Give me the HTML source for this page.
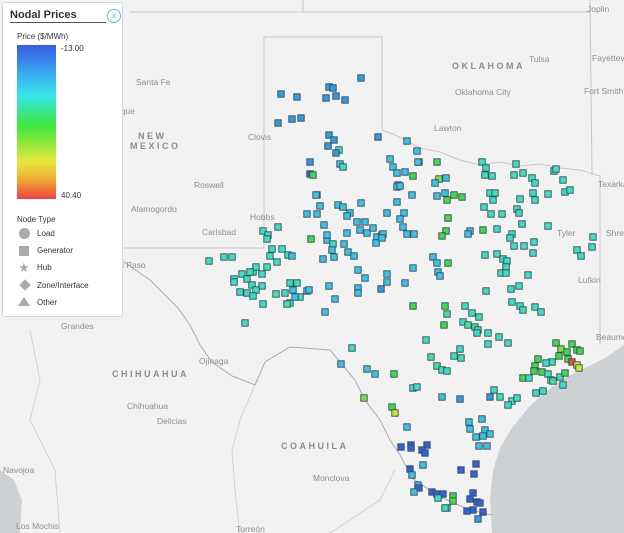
<!DOCTYPE html>
<html><head><meta charset="utf-8"><style>
html,body{margin:0;padding:0}
body{width:624px;height:533px;overflow:hidden;background:#f2f2f2;font-family:"Liberation Sans",sans-serif;position:relative}
svg{position:absolute;left:0;top:0}
.lbl{font-size:8.5px;fill:#8e8e8e}
.st{font-size:9px;fill:#8c8c8c;font-weight:bold;letter-spacing:2.5px}
#leg{position:absolute;left:2px;top:2px;width:121px;height:315px;background:#fff;border:1px solid #d8d8d8;border-radius:3px;box-sizing:border-box}
#leg .t{position:absolute;left:7px;top:6px;font-size:11px;font-weight:bold;color:#333}
#leg .ul{position:absolute;left:7px;top:19px;width:96px;height:1px;background:#555}
#leg .x{position:absolute;left:104px;top:6px;width:12px;height:12px;border:1.5px solid #4cc8e0;border-radius:50%;font-size:8px;color:#4cc8e0;text-align:center;line-height:12px}
#leg .s{position:absolute;font-size:8px;color:#333}
#bar{position:absolute;left:14px;top:42px;width:39px;height:154px;background:linear-gradient(#3a5ae6 0%,#38a8f0 18%,#36e6e8 33%,#3ee840 52%,#9ee83a 66%,#e8e83a 76%,#f0a632 88%,#f04040 100%)}
.ic{position:absolute;left:16px;background:#aaa}
</style></head><body>
<svg width="624" height="533" viewBox="0 0 624 533">
<path d="M0 470 L14 480 L22 500 L20 533 L0 533Z" fill="#cdd1d4"/>
<path d="M624 345 L605 358 L585 368 L565 378 L545 392 L528 408 L512 428 L500 448 L493 470 L490 500 L492 533 L624 533Z" fill="#cdd1d4"/>
<g fill="none" stroke="#c8c8c8" stroke-width="1">
<path d="M130 12 L590 12 M303 0 L303 12 M590 0 L592 175 M600 175 L600 345"/>
<path d="M264 37 L382 37 L382 130 L395 135 L405 140 L420 148 L440 152 L460 160 L480 165 L500 162 L520 166 L540 164 L560 168 L580 170 L600 176"/>
<path d="M264 37 L264 248 L124 248"/>
<path d="M124 262 L150 280 L165 295 L178 308 L190 325 L200 345 L212 362 L232 376 L255 385 L265 362 L290 347 L330 350 L340 362 L355 380 L365 400 L380 420 L390 440 L400 455 L412 478 L440 497 L470 510 L492 515" stroke="#aaa"/>
<path d="M255 385 L240 420 L232 450 L235 490 L240 533 M30 330 L40 380 L30 420 L55 470 L60 533 M330 533 L380 500 L395 470" stroke="#d2d2d2"/>
</g>
<g>
<text class="lbl" x="136" y="85">Santa Fe</text><text class="lbl" x="118" y="114">rque</text>
<text class="st" x="138" y="139">NEW</text><text class="st" x="130" y="149">MEXICO</text>
<text class="lbl" x="248" y="140">Clovis</text><text class="lbl" x="194" y="188">Roswell</text>
<text class="lbl" x="131" y="212">Alamogordo</text><text class="lbl" x="202" y="235">Carlsbad</text>
<text class="lbl" x="250" y="220">Hobbs</text><text class="lbl" x="122" y="268">l Paso</text>
<text class="st" x="452" y="69">OKLAHOMA</text><text class="lbl" x="529" y="62">Tulsa</text>
<text class="lbl" x="455" y="95">Oklahoma City</text><text class="lbl" x="434" y="131">Lawton</text>
<text class="lbl" x="584" y="94">Fort Smith</text><text class="lbl" x="592" y="61">Fayetteville</text>
<text class="lbl" x="587" y="12">Joplin</text><text class="lbl" x="598" y="187">Texarkana</text>
<text class="lbl" x="557" y="236">Tyler</text><text class="lbl" x="606" y="236">Shreveport</text>
<text class="lbl" x="578" y="283">Lufkin</text><text class="lbl" x="596" y="340">Beaumont</text>
<text class="lbl" x="61" y="329">Grandes</text><text class="lbl" x="199" y="364">Ojinaga</text>
<text class="st" x="112" y="377">CHIHUAHUA</text><text class="lbl" x="127" y="409">Chihuahua</text>
<text class="lbl" x="157" y="424">Delicias</text><text class="st" x="281" y="449">COAHUILA</text>
<text class="lbl" x="313" y="481">Monclova</text><text class="lbl" x="3" y="473">Navojoa</text>
<text class="lbl" x="16" y="529">Los Mochis</text><text class="lbl" x="236" y="532">Torreón</text>
</g>
<g id="m" stroke="#3a4a50" stroke-width="0.9"></g>
</svg>
<div id="leg">
<div class="t">Nodal Prices</div><div class="ul"></div><div class="x">x</div>
<div class="s" style="left:14px;top:29px">Price ($/MWh)</div>
<div id="bar"></div>
<div class="s" style="left:58px;top:41px">-13.00</div>
<div class="s" style="left:58px;top:188px">40.40</div>
<div class="s" style="left:14px;top:212px">Node Type</div>
<div class="ic" style="top:225px;width:11px;height:11px;border-radius:50%"></div><div class="s" style="left:34px;top:226px">Load</div>
<div class="ic" style="top:243px;width:10px;height:10px"></div><div class="s" style="left:34px;top:243px">Generator</div>
<div class="s" style="left:15px;top:257px;font-size:13px;color:#aaa">★</div><div class="s" style="left:34px;top:260px">Hub</div>
<div class="ic" style="top:278px;left:18px;width:8px;height:8px;transform:rotate(45deg)"></div><div class="s" style="left:34px;top:278px">Zone/Interface</div>
<div style="position:absolute;left:15px;top:294px;width:0;height:0;border-left:6px solid transparent;border-right:6px solid transparent;border-bottom:9px solid #aaa"></div><div class="s" style="left:34px;top:295px">Other</div>
</div>
<script>
var B='#2f9be8',C='#38c3ea',T='#38e0c4',G='#3ddc48',D='#3062e0',Y='#c8e83a',R='#f04a3a',L='#7ee040',E='#3ee2a8';
var P=[[361,78,B],[281,94,B],[297,97,B],[329,87,B],[333,88,B],[326,98,B],[336,96,B],[345,100,B],[278,123,B],[292,119,B],[301,118,B],[329,135,B],[334,140,B],[328,146,B],[339,150,T],[336,153,B],[310,162,B],[378,137,B],[407,141,C],[417,151,C],[390,159,C],[419,162,C],[437,162,G],[340,164,C],[343,167,T],[310,174,D],[313,175,G],[317,195,C],
[316,195,C],[320,206,C],[317,214,C],[307,214,C],[324,225,C],[263,231,T],[268,235,T],[267,239,T],[278,227,T],[272,249,T],[282,249,T],[288,255,T],[292,256,C],[270,256,T],[277,262,T],[311,239,G],[327,240,C],[327,235,C],[333,244,T],[344,244,C],[332,250,C],[334,257,C],[323,259,C],[348,252,C],[354,256,C],[347,233,C],[357,222,C],[365,222,C],[360,230,C],[367,233,C],[373,228,C],[377,237,C],[382,235,C],[376,243,C],[338,205,C],[343,207,C],[350,213,C],[347,216,C],[361,203,C],[387,213,C],[397,202,C],[404,213,C],[400,219,C],[403,227,C],[407,234,C],[414,234,C],[393,167,C],[397,173,C],[405,172,C],[418,162,C],[413,176,G],[398,185,C],[412,195,C],[439,179,L],[435,183,C],[446,178,C],[445,193,C],[437,196,C],[447,200,G],[454,195,G],[462,197,G],[448,218,G],[446,231,G],[442,236,G],[433,257,C],[437,263,C],[448,263,G],[438,272,C],[440,276,C],[413,268,C],[405,283,C],[387,274,C],[387,282,C],[358,270,C],[365,278,C],[329,286,C],[335,299,C],[325,312,C],[358,288,C],[358,293,C],[381,289,B],[413,306,G],[445,306,G],[447,314,E],[444,325,G],[426,340,T],[352,348,T],[397,187,C],[400,186,C],[383,234,C],[382,238,C],
[209,261,T],[224,257,T],[232,257,T],[234,279,T],[234,282,T],[242,274,T],[247,279,T],[253,272,T],[256,267,T],[250,272,T],[262,274,T],[267,267,T],[252,285,T],[262,286,T],[256,290,T],[240,292,T],[247,293,T],[253,296,T],[263,304,T],[276,294,T],[245,323,T],[290,283,T],[297,283,T],[293,290,C],[285,293,T],[300,297,T],[290,303,T],[287,304,T],[295,297,C],[307,291,C],[309,290,C],
[482,162,T],[486,168,T],[485,175,T],[492,176,T],[516,164,T],[514,175,T],[523,173,T],[554,171,T],[556,169,T],[532,178,T],[535,183,T],[563,180,T],[490,193,T],[495,193,T],[493,200,T],[484,207,T],[491,214,T],[502,214,T],[520,199,T],[533,193,T],[535,200,T],[548,194,T],[565,192,T],[570,190,T],[517,209,T],[519,213,T],[522,224,T],[548,226,T],[497,229,T],[512,234,T],[510,238,T],[534,242,T],[514,246,T],[524,246,T],[533,253,T],[593,237,T],[592,247,T],[577,250,T],[581,256,T],[485,255,T],[497,254,T],[503,259,T],[507,261,T],[506,267,T],[501,273,T],[506,273,T],[528,275,T],[470,231,C],[468,234,C],[483,230,G],[486,291,T],[511,289,T],[519,286,T],[512,302,T],[520,306,T],[523,310,T],[535,307,T],[541,312,T],[465,306,T],[472,313,T],[479,317,E],[463,322,T],[468,325,E],[475,327,E],[478,330,E],[477,333,T],[488,333,T],[499,337,T],[508,343,T],[488,344,T],[460,349,T],[431,357,E],[454,356,T],[461,358,T],[437,366,E],[442,370,E],[447,371,T],[394,374,G],[413,388,T],[417,387,T],[442,397,C],[460,399,B],[490,397,B],[494,390,T],[500,397,E],[512,401,T],[517,398,T],[508,405,T],[543,391,T],[536,393,T],[392,407,G],[341,364,C],[367,369,C],[375,374,C],[364,398,L],[395,413,Y],[407,427,C],
[556,343,G],[561,349,L],[572,344,G],[567,352,G],[577,350,G],[580,351,G],[568,359,G],[572,362,R],[577,365,Y],[579,368,Y],[559,356,G],[552,362,T],[546,363,T],[538,359,G],[535,366,G],[534,371,G],[542,372,G],[548,374,T],[551,380,E],[553,381,E],[560,377,T],[563,385,T],[523,378,G],[529,378,T],[565,373,G],
[469,422,C],[482,419,C],[470,429,C],[485,430,C],[483,436,C],[476,437,C],[490,434,C],[479,446,C],[487,446,C],[401,447,D],[411,445,D],[411,448,D],[427,445,D],[422,450,D],[425,453,D],[423,465,C],[410,469,D],[412,475,C],[461,470,D],[476,464,D],[474,474,D],[418,485,C],[419,488,D],[414,492,C],[432,492,D],[437,494,D],[443,494,D],[438,498,T],[453,496,G],[453,501,G],[447,508,T],[473,493,D],[470,499,D],[477,502,D],[480,503,D],[473,510,D],[467,511,D],[483,512,D],[478,519,B],[445,508,T]];
var s='';P.forEach(function(p){s+='<rect x="'+(p[0]-3.2)+'" y="'+(p[1]-3.2)+'" width="6.4" height="6.4" fill="'+p[2]+'"/>';});
document.getElementById('m').innerHTML=s;
</script>
</body></html>
